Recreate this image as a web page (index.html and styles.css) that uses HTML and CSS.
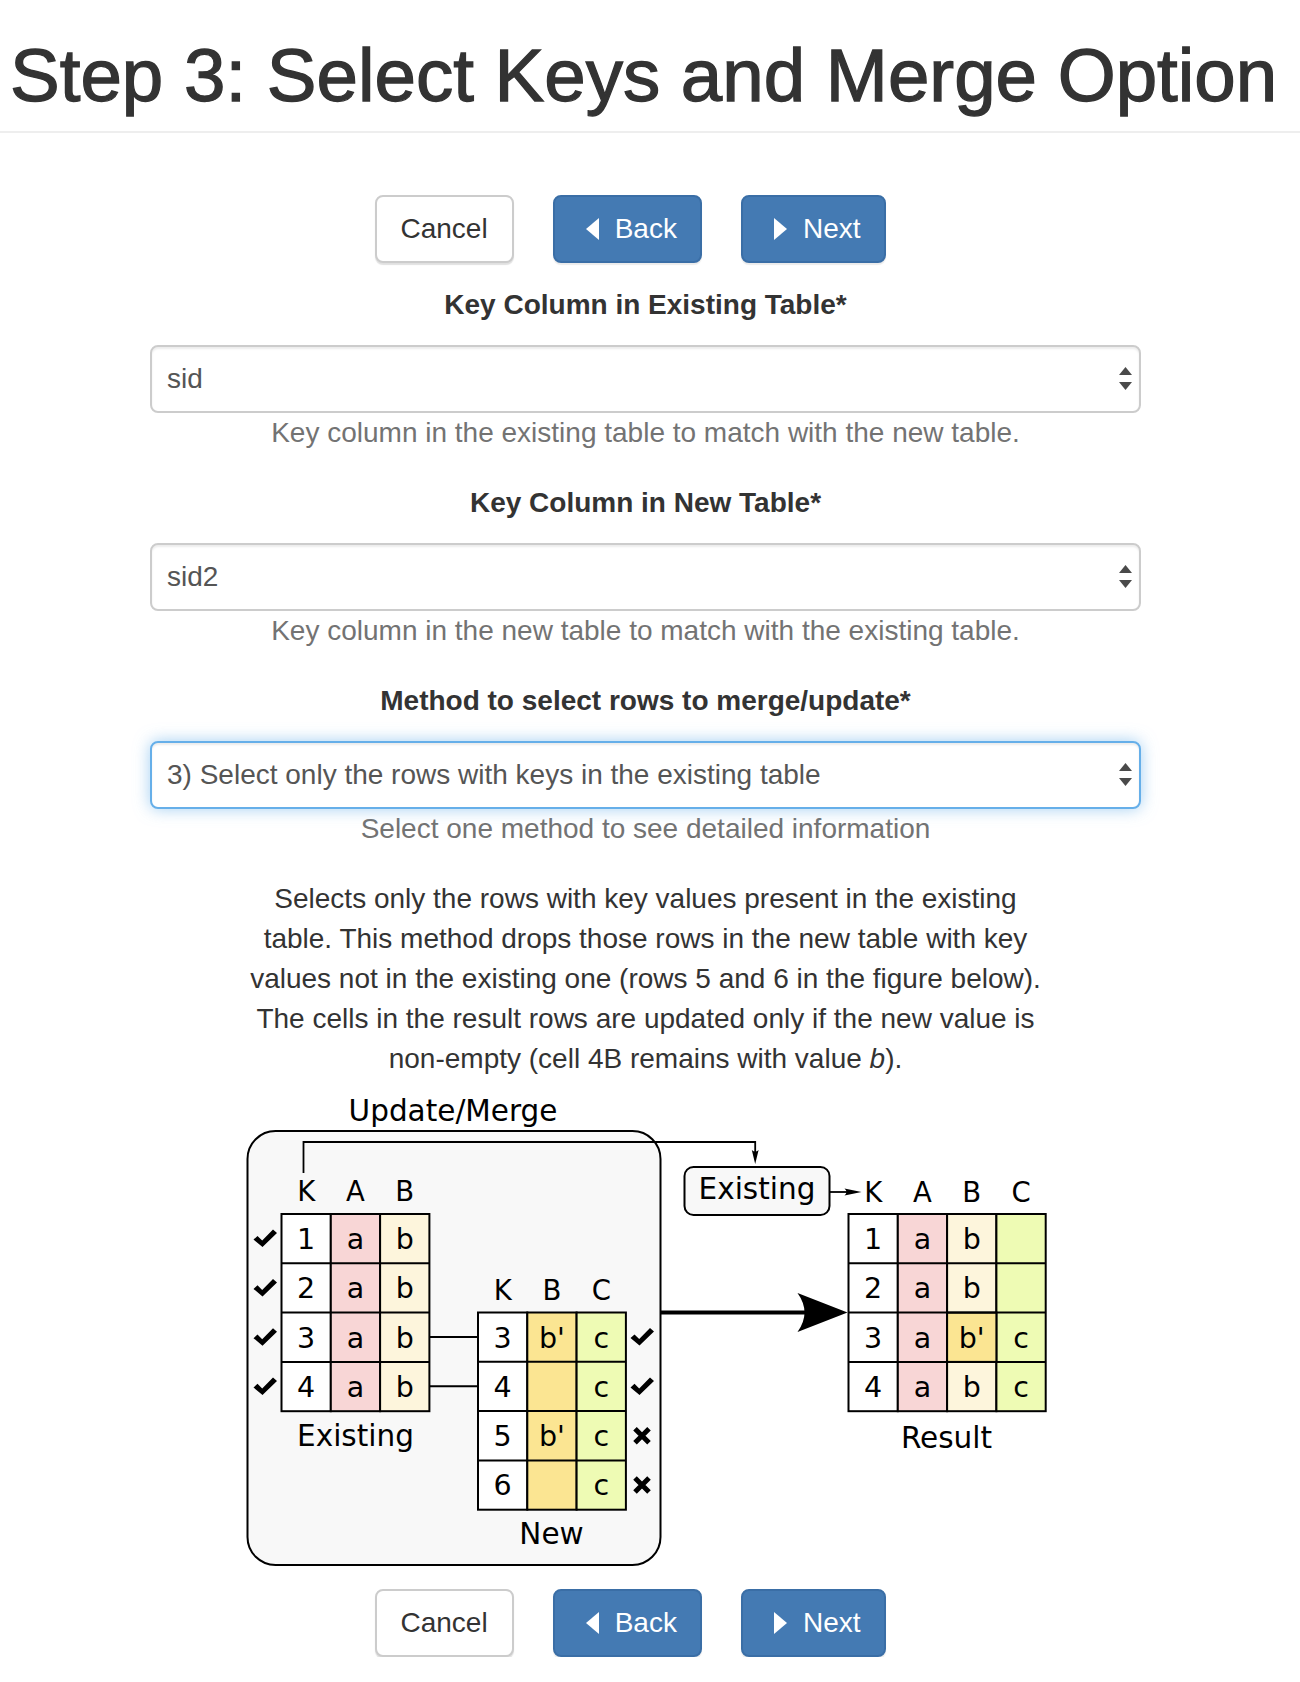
FILE: index.html
```html
<!DOCTYPE html>
<html lang="en">
<head>
<meta charset="utf-8">
<title>Step 3: Select Keys and Merge Option</title>
<link rel="stylesheet" href="styles.css">
</head>
<body>
<div class="page-header"><h1>Step 3: Select Keys and Merge Option</h1></div>
<div class="content">
  <div class="btn-row top">
    <button class="btn btn-default">Cancel</button>
    <button class="btn btn-primary"><svg class="btn-icon" viewBox="0 0 13 22"><polygon points="13,0 13,22 0,11"/></svg>Back</button>
    <button class="btn btn-primary"><svg class="btn-icon" viewBox="0 0 13 22"><polygon points="0,0 13,11 0,22"/></svg>Next</button>
  </div>

  <div class="form-group">
    <label class="form-label">Key Column in Existing Table*</label>
    <div class="select-wrap">
      <select class="form-control"><option>sid</option></select>
      <svg class="caret" viewBox="0 0 13 23"><polygon points="0,8 6.5,0 13,8"/><polygon points="0,15 13,15 6.5,23"/></svg>
    </div>
    <p class="help">Key column in the existing table to match with the new table.</p>
  </div>

  <div class="form-group">
    <label class="form-label">Key Column in New Table*</label>
    <div class="select-wrap">
      <select class="form-control"><option>sid2</option></select>
      <svg class="caret" viewBox="0 0 13 23"><polygon points="0,8 6.5,0 13,8"/><polygon points="0,15 13,15 6.5,23"/></svg>
    </div>
    <p class="help">Key column in the new table to match with the existing table.</p>
  </div>

  <div class="form-group">
    <label class="form-label">Method to select rows to merge/update*</label>
    <div class="select-wrap">
      <select class="form-control focus"><option>3) Select only the rows with keys in the existing table</option></select>
      <svg class="caret" viewBox="0 0 13 23"><polygon points="0,8 6.5,0 13,8"/><polygon points="0,15 13,15 6.5,23"/></svg>
    </div>
    <p class="help">Select one method to see detailed information</p>
  </div>

  <p class="desc">Selects only the rows with key values present in the existing<br>table. This method drops those rows in the new table with key<br>values not in the existing one (rows 5 and 6 in the figure below).<br>The cells in the result rows are updated only if the new value is<br>non-empty (cell 4B remains with value <em>b</em>).</p>

  <svg class="diagram" viewBox="244.5 1090 802 480" width="802" height="480">
    <g font-family="'DejaVu Sans', sans-serif" fill="#000">
      <text x="452.5" y="1121" font-size="29.5" text-anchor="middle">Update/Merge</text>
      <rect x="247" y="1131" width="413" height="434" rx="28" fill="#f8f8f8" stroke="#000" stroke-width="2"/>

      <path d="M303,1173 V1142 H754.7 V1153" fill="none" stroke="#000" stroke-width="1.8"/>
      <path d="M754.7,1164 L751.3,1150 Q754.7,1153 758.1,1150 Z"/>

      <rect x="684" y="1167" width="145" height="48" rx="9" fill="#f8f8f8" stroke="#000" stroke-width="2"/>
      <text x="756.5" y="1199" font-size="29.5" text-anchor="middle">Existing</text>
      <path d="M829,1192 H848" stroke="#000" stroke-width="1.8"/>
      <path d="M861,1192 L844,1188.5 Q848,1192 844,1195.5 Z"/>

      <path d="M660,1312.5 H805" stroke="#000" stroke-width="4"/>
      <path d="M847,1312.5 L797,1293 Q811,1312.5 797,1332 Z"/>

      <path d="M429,1337 H477.5 M429,1386.3 H477.5" stroke="#000" stroke-width="2"/>

      <!-- Existing table -->
      <g font-size="27.5" text-anchor="middle">
        <text x="305.65" y="1201">K</text><text x="354.95" y="1201">A</text><text x="404.25" y="1201">B</text>
      </g>
      <g stroke="#000" stroke-width="2">
        <rect x="281" y="1214" width="49.3" height="197.2" fill="#fff"/>
        <rect x="330.3" y="1214" width="49.3" height="197.2" fill="#f8d6d6"/>
        <rect x="379.6" y="1214" width="49.3" height="197.2" fill="#fdf5dc"/>
        <path d="M281,1263.3 H428.9 M281,1312.6 H428.9 M281,1361.9 H428.9"/>
      </g>
      <g font-size="28.5" text-anchor="middle">
        <text x="305.65" y="1249">1</text><text x="354.95" y="1249">a</text><text x="404.25" y="1249">b</text>
        <text x="305.65" y="1298.3">2</text><text x="354.95" y="1298.3">a</text><text x="404.25" y="1298.3">b</text>
        <text x="305.65" y="1347.6">3</text><text x="354.95" y="1347.6">a</text><text x="404.25" y="1347.6">b</text>
        <text x="305.65" y="1396.9">4</text><text x="354.95" y="1396.9">a</text><text x="404.25" y="1396.9">b</text>
      </g>
      <text x="355" y="1446" font-size="29.5" text-anchor="middle">Existing</text>

      <!-- check marks left -->
      <g>
        <polygon transform="translate(253,1229.6)" points="0,10 4,6.3 8.7,11 19.5,0 23.5,3.5 9,17.5"/>
        <polygon transform="translate(253,1278.9)" points="0,10 4,6.3 8.7,11 19.5,0 23.5,3.5 9,17.5"/>
        <polygon transform="translate(253,1328.2)" points="0,10 4,6.3 8.7,11 19.5,0 23.5,3.5 9,17.5"/>
        <polygon transform="translate(253,1377.5)" points="0,10 4,6.3 8.7,11 19.5,0 23.5,3.5 9,17.5"/>
      </g>

      <!-- New table -->
      <g font-size="27.5" text-anchor="middle">
        <text x="502.15" y="1300">K</text><text x="551.45" y="1300">B</text><text x="600.75" y="1300">C</text>
      </g>
      <g stroke="#000" stroke-width="2">
        <rect x="477.5" y="1312.5" width="49.3" height="197.2" fill="#fff"/>
        <rect x="526.8" y="1312.5" width="49.3" height="197.2" fill="#fbe592"/>
        <rect x="576.1" y="1312.5" width="49.3" height="197.2" fill="#eefbb4"/>
        <path d="M477.5,1361.8 H625.4 M477.5,1411.1 H625.4 M477.5,1460.4 H625.4"/>
      </g>
      <g font-size="28.5" text-anchor="middle">
        <text x="502.15" y="1347.5">3</text><text x="551.45" y="1347.5">b'</text><text x="600.75" y="1347.5">c</text>
        <text x="502.15" y="1396.8">4</text><text x="600.75" y="1396.8">c</text>
        <text x="502.15" y="1446.1">5</text><text x="551.45" y="1446.1">b'</text><text x="600.75" y="1446.1">c</text>
        <text x="502.15" y="1495.4">6</text><text x="600.75" y="1495.4">c</text>
      </g>
      <text x="551" y="1544" font-size="29.5" text-anchor="middle">New</text>

      <!-- check / cross right -->
      <polygon transform="translate(630,1328.1)" points="0,10 4,6.3 8.7,11 19.5,0 23.5,3.5 9,17.5"/>
      <polygon transform="translate(630,1377.4)" points="0,10 4,6.3 8.7,11 19.5,0 23.5,3.5 9,17.5"/>
      <g stroke="#000" stroke-width="5">
        <path d="M634.5,1428.8 L648.5,1442.8 M648.5,1428.8 L634.5,1442.8"/>
        <path d="M634.5,1478.1 L648.5,1492.1 M648.5,1478.1 L634.5,1492.1"/>
      </g>

      <!-- Result table -->
      <g font-size="27.5" text-anchor="middle">
        <text x="872.65" y="1202">K</text><text x="921.95" y="1202">A</text><text x="971.25" y="1202">B</text><text x="1020.55" y="1202">C</text>
      </g>
      <g stroke="#000" stroke-width="2">
        <rect x="848" y="1214" width="49.3" height="197.2" fill="#fff"/>
        <rect x="897.3" y="1214" width="49.3" height="197.2" fill="#f8d6d6"/>
        <rect x="946.6" y="1214" width="49.3" height="197.2" fill="#fdf5dc"/>
        <rect x="995.9" y="1214" width="49.3" height="197.2" fill="#eefbb4"/>
        <rect x="946.6" y="1312.6" width="49.3" height="49.3" fill="#fbe592"/>
        <path d="M848,1263.3 H1045.2 M848,1312.6 H1045.2 M848,1361.9 H1045.2"/>
      </g>
      <g font-size="28.5" text-anchor="middle">
        <text x="872.65" y="1249">1</text><text x="921.95" y="1249">a</text><text x="971.25" y="1249">b</text>
        <text x="872.65" y="1298.3">2</text><text x="921.95" y="1298.3">a</text><text x="971.25" y="1298.3">b</text>
        <text x="872.65" y="1347.6">3</text><text x="921.95" y="1347.6">a</text><text x="971.25" y="1347.6">b'</text><text x="1020.55" y="1347.6">c</text>
        <text x="872.65" y="1396.9">4</text><text x="921.95" y="1396.9">a</text><text x="971.25" y="1396.9">b</text><text x="1020.55" y="1396.9">c</text>
      </g>
      <text x="946" y="1448" font-size="29.5" text-anchor="middle">Result</text>
    </g>
  </svg>

  <div class="btn-row bottom">
    <button class="btn btn-default">Cancel</button>
    <button class="btn btn-primary"><svg class="btn-icon" viewBox="0 0 13 22"><polygon points="13,0 13,22 0,11"/></svg>Back</button>
    <button class="btn btn-primary"><svg class="btn-icon" viewBox="0 0 13 22"><polygon points="0,0 13,11 0,22"/></svg>Next</button>
  </div>
</div>
</body>
</html>
```

FILE: styles.css
```css
body {
  margin: 0;
  font-family: "Liberation Sans", Arial, sans-serif;
  font-size: 28px;
  line-height: 40px;
  color: #333;
  background: #fff;
}

.page-header {
  padding: 35px 0 14px 10px;
  border-bottom: 2px solid #eee;
}

.page-header h1 {
  margin: 0;
  font-size: 74.5px;
  line-height: 1.1;
  font-weight: 500;
  color: #333;
  -webkit-text-stroke: 1.3px #333;
}

.content {
  width: 991px;
  margin-left: 150px;
  padding-top: 62px;
}

.btn-row {
  display: flex;
  justify-content: center;
  gap: 39px;
  padding-right: 31px;
}

.btn-row.top {
  margin-bottom: 22px;
}

.btn-row.bottom {
  margin-top: 19px;
}

.btn {
  box-sizing: border-box;
  height: 68px;
  display: inline-flex;
  align-items: center;
  border: 2px solid;
  border-radius: 8px;
  font-family: inherit;
  font-size: 28px;
  line-height: 40px;
  padding: 0 24px;
  margin: 0;
}

.btn-default {
  background: #fff;
  border-color: #ccc;
  color: #333;
  box-shadow: 0 2px 1px rgba(0, 0, 0, 0.12);
}

.btn-primary {
  background: #447ab3;
  border-color: #3a6ea6;
  color: #fff;
  padding: 0 23px 0 31px;
  box-shadow: 0 2px 1px rgba(0, 0, 0, 0.08);
}

.btn-icon {
  width: 13px;
  height: 22px;
  margin-right: 16px;
  fill: #fff;
}

.form-group {
  margin-bottom: 30px;
}

.form-label {
  display: block;
  text-align: center;
  font-weight: bold;
  margin-bottom: 20px;
}

.select-wrap {
  position: relative;
}

.form-control {
  display: block;
  width: 100%;
  box-sizing: border-box;
  height: 68px;
  padding: 0 40px 0 15px;
  font-family: inherit;
  font-size: 28px;
  color: #555;
  background: #fff;
  border: 2px solid #ccc;
  border-radius: 8px;
  box-shadow: inset 0 2px 2px rgba(0, 0, 0, 0.075);
  -webkit-appearance: none;
  appearance: none;
  outline: 0;
}

.form-control.focus {
  border-color: #66afe9;
  box-shadow: inset 0 2px 2px rgba(0, 0, 0, 0.075), 0 0 16px rgba(102, 175, 233, 0.6);
}

.caret {
  position: absolute;
  right: 9px;
  top: 22px;
  width: 13px;
  height: 23px;
  fill: #4a4a4a;
  pointer-events: none;
}

.help {
  margin: 0;
  text-align: center;
  color: #737373;
}

.desc {
  margin: 0 0 11px;
  text-align: center;
}

.diagram {
  display: block;
  width: 802px;
  height: 480px;
  margin: 0 auto;
}
```
